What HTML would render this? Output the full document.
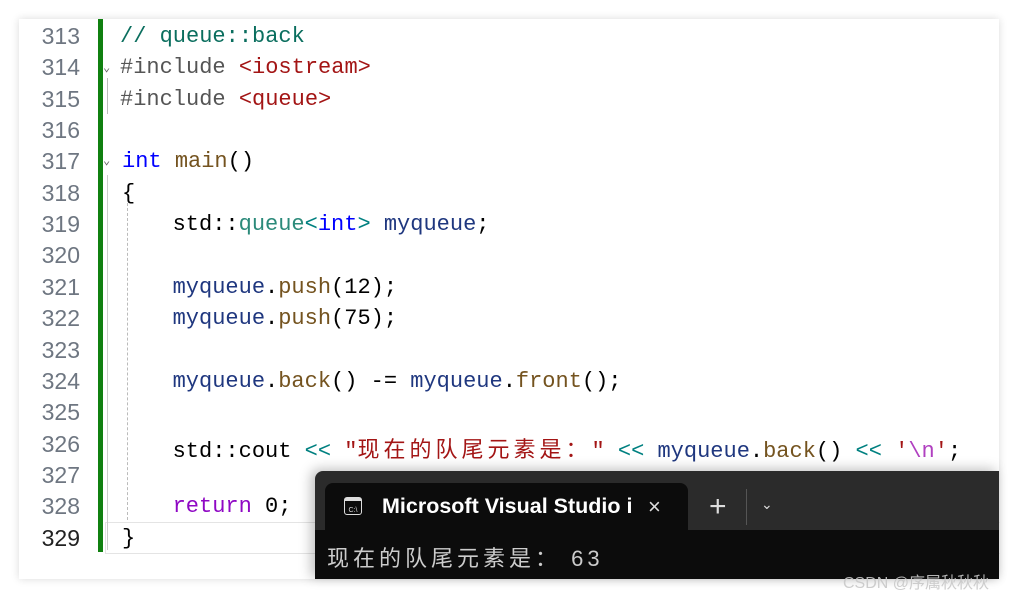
<!DOCTYPE html>
<html><head><meta charset="utf-8"><style>
body{margin:0;width:1019px;height:599px;background:#fff;position:relative;overflow:hidden;font-family:"Liberation Mono","Noto Sans CJK SC",monospace}
.card{position:absolute;left:19px;top:19px;width:980px;height:560px;background:#fff;box-shadow:0 0 8px rgba(0,0,0,.15)}
.ln{position:absolute;left:20px;width:60px;text-align:right;font-family:"Liberation Sans",sans-serif;font-size:23px;color:#6e7681}
.code{position:absolute;white-space:pre;font-size:22px;color:#000}
.bar{position:absolute;left:98px;top:19px;width:5px;height:533px;background:#108010}
.cm{color:#0a6e5e}.pp{color:#555}.st{color:#a31515}.kw{color:#0000ff}.fn{color:#74531f}.ty{color:#2b8a7a}.vr{color:#1f377f}.rt{color:#8f08c4}.op{color:#008080}.esc{color:#b040c0}
.cjk{font-family:"Noto Sans CJK SC",sans-serif;letter-spacing:4px}
</style></head><body>
<div class="card"></div>
<div class="bar"></div>
<div style="position:absolute;left:105px;top:522px;width:894px;height:30px;border:1px solid #e4e4e4;border-right:none"></div>
<div style="position:absolute;left:107px;top:78px;width:1px;height:36px;background:#bbb"></div>
<div style="position:absolute;left:127px;top:203px;width:0;height:317px;border-left:1px dashed #bbb"></div>
<div style="position:absolute;left:107px;top:175px;width:1px;height:375px;background:#ccc"></div>
<div style="position:absolute;left:103px;top:60px;font-size:12px;color:#666">⌄</div>
<div style="position:absolute;left:103px;top:153px;font-size:12px;color:#666">⌄</div>
<div id="lines"></div>
<script>
var nums=[];for(var i=313;i<=329;i++)nums.push(i);
var code=[
'<span class="cm">// queue::back</span>',
'<span class="pp">#include </span><span class="st">&lt;iostream&gt;</span>',
'<span class="pp">#include </span><span class="st">&lt;queue&gt;</span>',
'',
'<span class="kw">int</span> <span class="fn">main</span>()',
'{',
'   std::<span class="ty">queue</span><span class="op">&lt;</span><span class="kw">int</span><span class="op">&gt;</span> <span class="vr">myqueue</span>;',
'',
'   <span class="vr">myqueue</span>.<span class="fn">push</span>(12);',
'   <span class="vr">myqueue</span>.<span class="fn">push</span>(75);',
'',
'   <span class="vr">myqueue</span>.<span class="fn">back</span>() -= <span class="vr">myqueue</span>.<span class="fn">front</span>();',
'',
'   std::cout <span class="op">&lt;&lt;</span> <span class="st">"<span class="cjk">现在的队尾元素是：</span>"</span> <span class="op">&lt;&lt;</span> <span class="vr">myqueue</span>.<span class="fn">back</span>() <span class="op">&lt;&lt;</span> <span class="st">\'<span class="esc">\\n</span>\'</span>;',
'',
'   <span class="rt">return</span> 0;',
'}'];
var h='';
for(var i=0;i<17;i++){var t=23+i*31.35;
var left=i>=4?122:120;
h+='<div class="ln" style="top:'+t+'px;'+(i==16?'color:#222':'')+'">'+nums[i]+'</div>';
h+='<div class="code" style="left:'+(i>=6&&i<16?133:left)+'px;top:'+(t+1)+'px">'+code[i]+'</div>';}
document.getElementById('lines').innerHTML=h;
</script>
<div style="position:absolute;left:315px;top:471px;width:684px;height:108px;background:#2b2b2b;border-radius:8px 0 0 0;box-shadow:-4px -2px 12px rgba(0,0,0,.25)"></div>
<div style="position:absolute;left:325px;top:483px;width:363px;height:50px;background:#0c0c0c;border-radius:8px 8px 0 0"></div>
<div style="position:absolute;left:315px;top:530px;width:684px;height:49px;background:#0c0c0c"></div>
<div style="position:absolute;left:344px;top:497px;width:18px;height:18px;border:1.5px solid #ddd;border-radius:3px;box-sizing:border-box;color:#ddd;font:7px 'Liberation Sans';line-height:20px;text-align:center;border-top-width:4px">C:\</div>
<div style="position:absolute;left:382px;top:494px;color:#fff;font:bold 21.5px 'Liberation Sans',sans-serif;white-space:nowrap;width:250px;overflow:hidden">Microsoft Visual Studio i</div>
<div style="position:absolute;left:648px;top:494px;color:#ddd;font:22px 'Liberation Sans'">×</div>
<div style="position:absolute;left:709px;top:490px;color:#ddd;font:30px 'Liberation Sans'">+</div>
<div style="position:absolute;left:746px;top:489px;width:1px;height:36px;background:#555"></div>
<div style="position:absolute;left:761px;top:496px;color:#ddd;font:14px 'Liberation Sans'">⌄</div>
<div style="position:absolute;left:327px;top:541px;color:#ccc;font:22px 'Liberation Sans','Noto Sans CJK SC',sans-serif;letter-spacing:4px">现在的队尾元素是： 63</div>
<div style="position:absolute;left:843px;top:569px;color:rgba(200,200,200,.9);font:16px 'Liberation Sans','Noto Sans CJK SC',sans-serif;white-space:nowrap">CSDN @序属秋秋秋</div>
</body></html>
